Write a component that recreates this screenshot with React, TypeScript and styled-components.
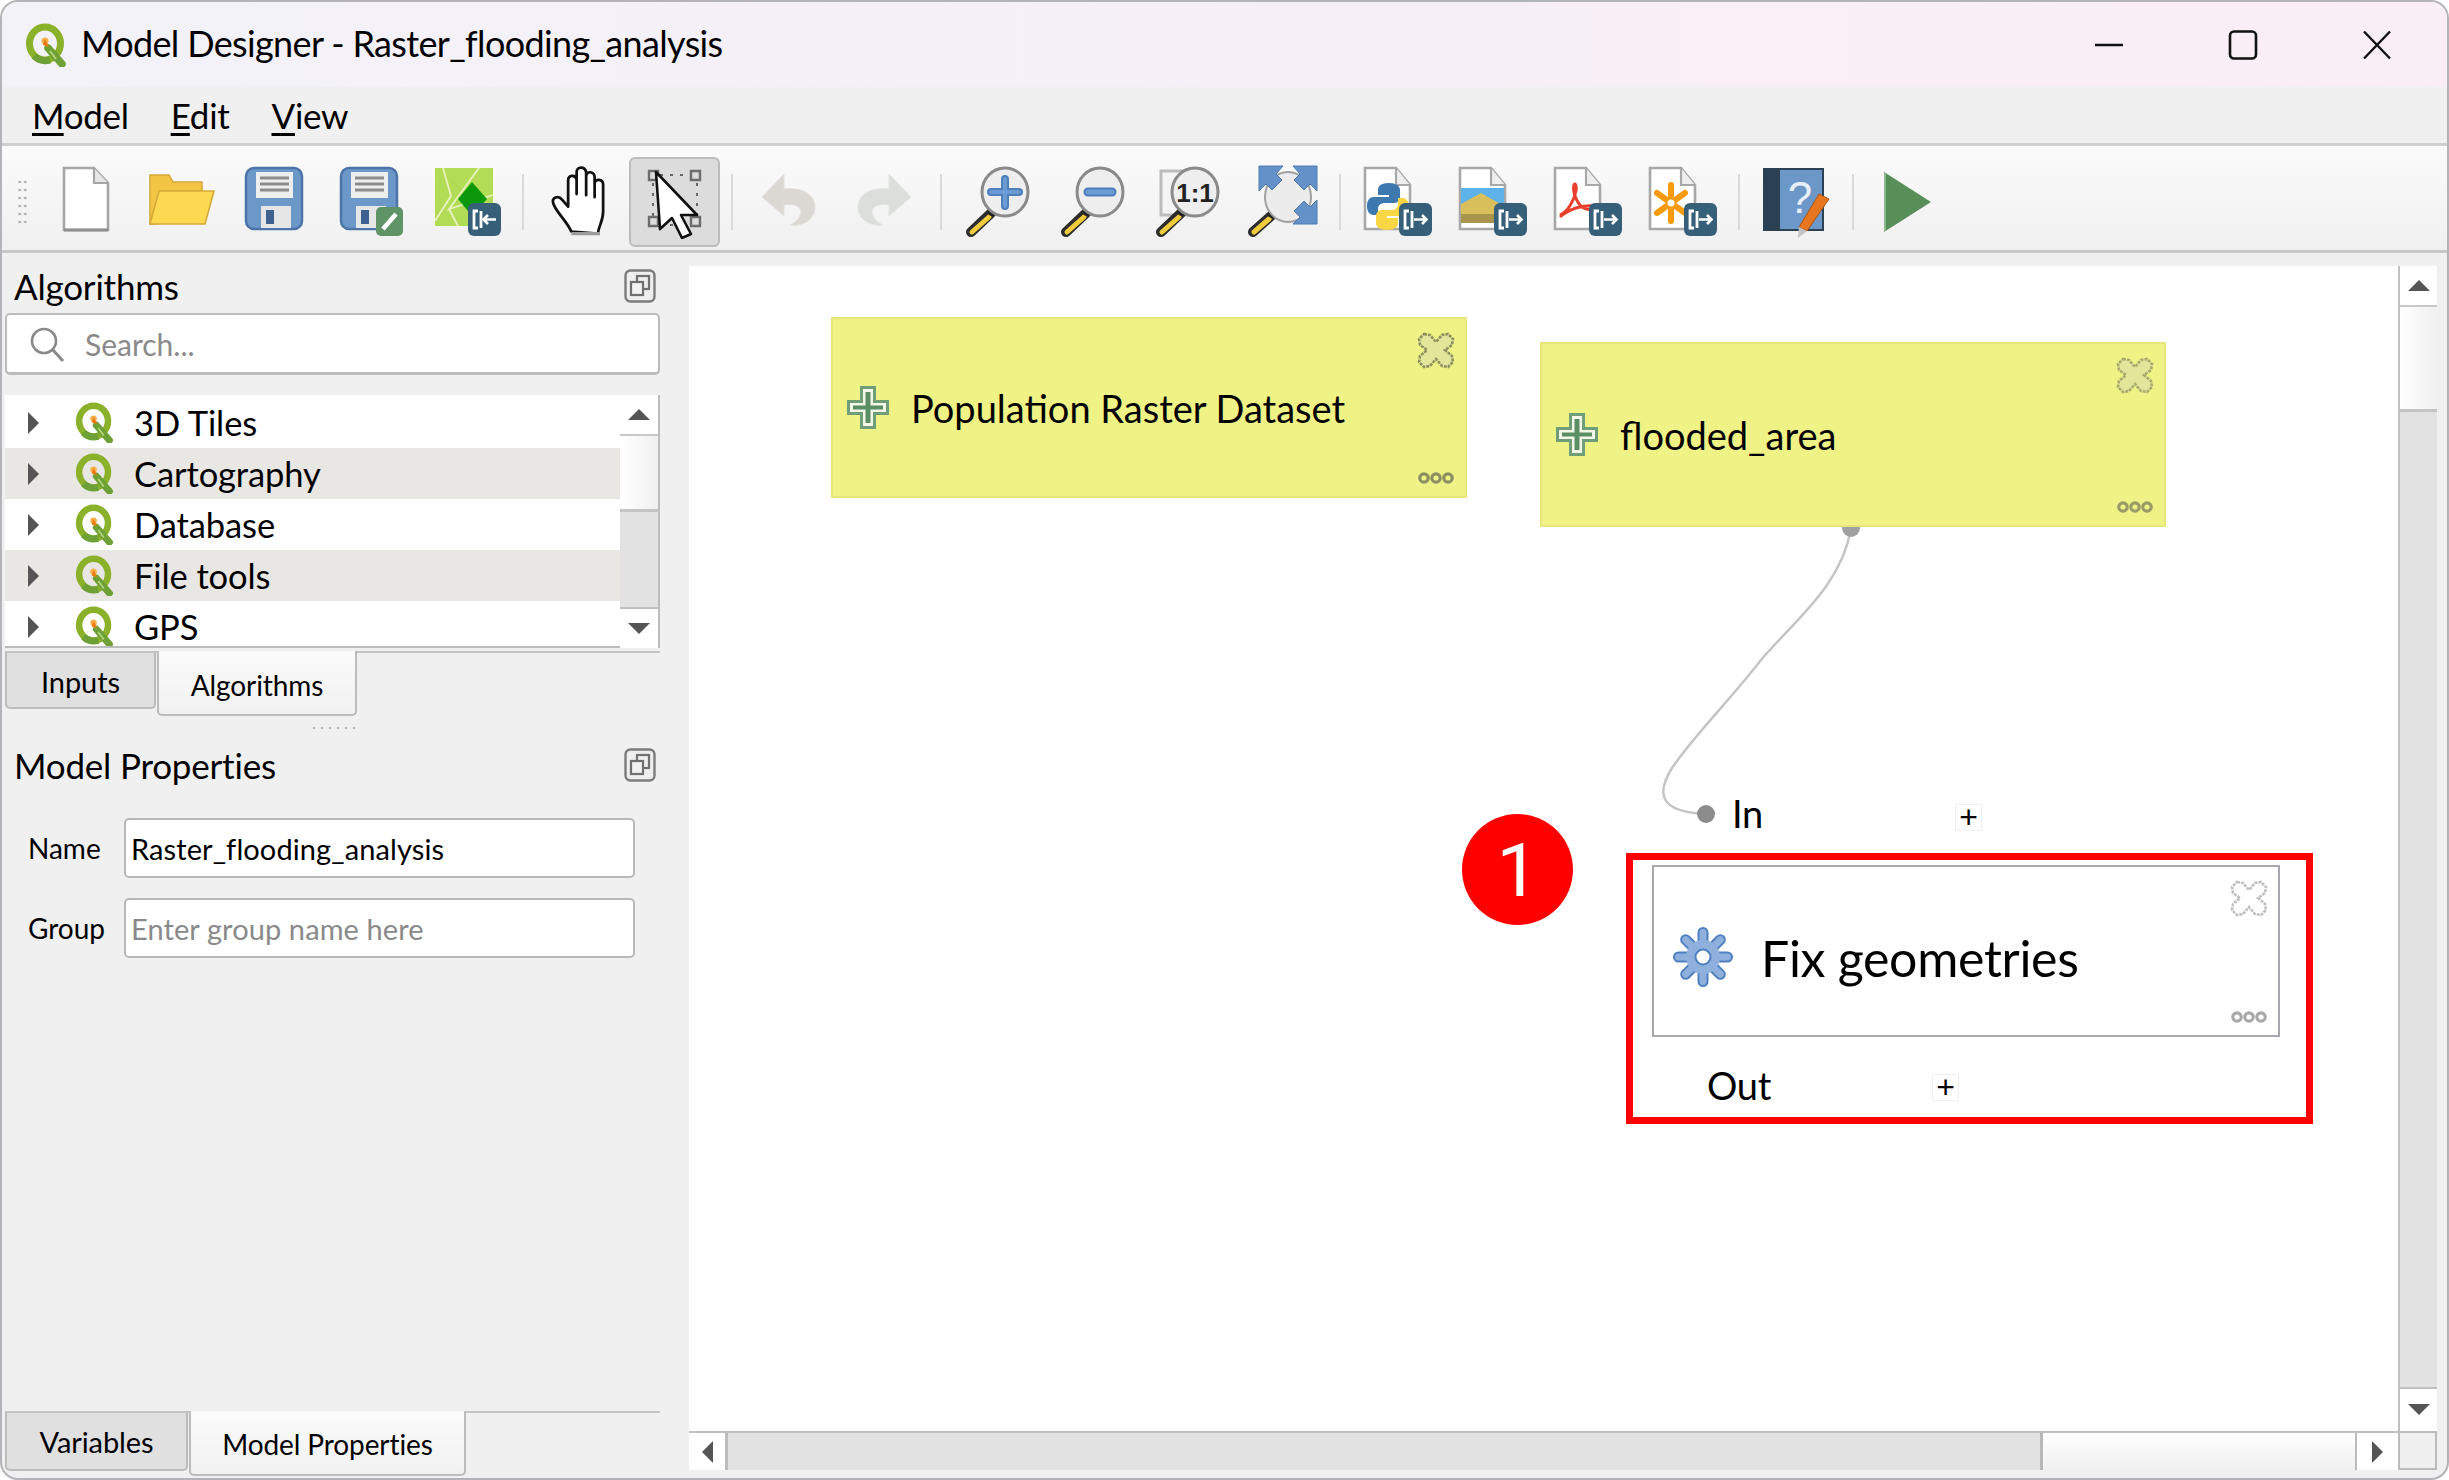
import React from 'react';
import styled, { createGlobalStyle } from 'styled-components';

const GlobalStyle = createGlobalStyle`
  * { box-sizing: border-box; }
  html, body { margin: 0; padding: 0; background: #fff; }
  body { font-family: Lato, "Open Sans", sans-serif; color: #000; }
`;

const Badge = ({ out = true }: { out?: boolean }) => (
  <g>
    <rect x="37" y="38" width="33" height="33" rx="6" fill="#36607a" />
    <path d="M47 46h-4v17h4M50 46v17" stroke="#fff" strokeWidth="2.800" fill="none" />
    {out ? (
      <path d="M52 54.500h12M60 50l4.500 4.500L60 59" stroke="#fff" strokeWidth="2.600" fill="none" />
    ) : (
      <path d="M65 54.500H53M57 50l-4.500 4.500L57 59" stroke="#fff" strokeWidth="2.600" fill="none" />
    )}
  </g>
);

const Page = ({ children }: { children?: React.ReactNode }) => (
  <>
    <path d="M3 3h31l14 17v44H3z" fill="#fff" stroke="#a8a8a8" strokeWidth="2.600" />
    <path d="M34 3v17h14" fill="#eee" stroke="#a8a8a8" strokeWidth="2.200" />
    {children}
    <Badge />
  </>
);

const Lens = ({ children }: { children?: React.ReactNode }) => (
  <>
    <path d="M28 48L8 67" stroke="#2c2c2c" strokeWidth="10" strokeLinecap="round" />
    <path d="M26 52L9 67" stroke="#f0cc3c" strokeWidth="5" strokeLinecap="round" />
    <circle cx="29" cy="47" r="4" fill="#222" />
    <ellipse cx="42" cy="27" rx="23" ry="24" fill="#eeeeee" stroke="#8a8a8a" strokeWidth="3" />
    {children}
  </>
);

const Disk = () => (
  <>
    <rect x="5" y="3" width="56" height="61" rx="8" fill="#6c98c9" stroke="#4c74a8" strokeWidth="2.500" />
    <rect x="15" y="7" width="37" height="26" fill="#eeeeee" />
    <path d="M19 13h29M19 19h29M19 25h29" stroke="#8c8c8c" strokeWidth="3" />
    <rect x="20" y="41" width="30" height="22" fill="#e6e6e6" />
    <rect x="25" y="45" width="8" height="14" fill="#3d6190" />
  </>
);

const icons: Record<string, React.ReactNode> = {
  new: (
    <>
      <path d="M13 3h30l14 15v47H13z" fill="#fff" stroke="#a6a6a6" strokeWidth="2.600" />
      <path d="M43 3v15h14" fill="#e6e6e6" stroke="#a6a6a6" strokeWidth="2.200" />
      <path d="M13 65h44" stroke="#8f8f8f" strokeWidth="3" />
    </>
  ),
  open: (
    <>
      <path d="M4 59V10h19l4 7h29v9H18l-6 33z" fill="#f2c544" stroke="#d6aa38" strokeWidth="1.600" />
      <path d="M4 59l9-33h55l-9 33z" fill="#fdd952" stroke="#d6aa38" strokeWidth="1.600" />
    </>
  ),
  save: <Disk />,
  saveAs: (
    <>
      <Disk />
      <rect x="40" y="42" width="27" height="29" rx="5" fill="#5f9467" />
      <path d="M47 64l13-15" stroke="#fff" strokeWidth="4.500" />
    </>
  ),
  exportModel: (
    <>
      <rect x="4" y="3" width="58" height="58" fill="#b2dc56" />
      <path d="M12 3l8 28-16 25M48 3L18 44l44-14M18 44l9 17" stroke="#e8f3c0" strokeWidth="1.800" fill="none" />
      <path d="M41 17l15 17-15 17-14-17z" fill="#0b990b" />
      <Badge out={false} />
    </>
  ),
  hand: (
    <g transform="translate(3 0) scale(1.060 1.040)">
      <path
        d="M22 64C18 54 8 46 5 37c-2-6 5-8 8-4l6 7V15c0-6 7-6 8-1v14-21c0-6 8-6 9 0v22-18c0-6 8-5 8 1v19-13c0-5 8-5 8 1v26c0 9-4 13-5 21z"
        fill="#fff"
        stroke="#111"
        strokeWidth="2.600"
        strokeLinejoin="round"
      />
      <path d="M22 66h27" stroke="#9a9a9a" strokeWidth="3" />
    </g>
  ),
  select: (
    <>
      <path d="M20 10h30M57 18v36M13 18v36M20 60h30" stroke="#666" strokeWidth="2" strokeDasharray="3 7" />
      <path d="M9 6h9v9H9zM51 6h9v9h-9zM9 52h9v9H9zM51 52h9v9h-9z" fill="none" stroke="#6c6c6c" strokeWidth="2.400" />
      <path d="M16 7l41 43H41l10 19-9 4-10-20-12 11z" fill="#fff" stroke="#111" strokeWidth="2.600" strokeLinejoin="round" />
    </>
  ),
  undo: (
    <path
      transform="matrix(-1 0 0 1 70 0)"
      d="M40 9l22 23-22 19V40c-10-2-20 2-16 10 2 6 6 8 10 10-10 2-24-4-25-16-1-16 15-22 31-20z"
      fill="#dbd7d2"
      stroke="#e4e1dd"
    />
  ),
  redo: (
    <path
      d="M40 9l22 23-22 19V40c-10-2-20 2-16 10 2 6 6 8 10 10-10 2-24-4-25-16-1-16 15-22 31-20z"
      fill="#dbdedb"
      stroke="#e3e6e3"
    />
  ),
  zoomIn: (
    <Lens>
      <path d="M42 14v27M28 27h28" stroke="#4d7fbd" strokeWidth="8" strokeLinecap="round" />
      <path d="M42 14v27M28 27h28" stroke="#6c9ad2" strokeWidth="4" strokeLinecap="round" />
    </Lens>
  ),
  zoomOut: (
    <Lens>
      <path d="M30 27h24" stroke="#4d7fbd" strokeWidth="9" strokeLinecap="round" />
      <path d="M30 27h24" stroke="#6c9ad2" strokeWidth="5" strokeLinecap="round" />
    </Lens>
  ),
  zoomActual: (
    <>
      <rect x="8" y="6" width="42" height="44" fill="#f4f4f4" stroke="#bcbcbc" strokeWidth="3" />
      <Lens>
        <text x="42" y="37" textAnchor="middle" fontFamily="Liberation Sans, sans-serif" fontWeight="700" fontSize="26" fill="#222">
          1:1
        </text>
      </Lens>
    </>
  ),
  zoomFull: (
    <>
      <path d="M23 51L5 67" stroke="#2c2c2c" strokeWidth="10" strokeLinecap="round" />
      <path d="M21 54L6 67" stroke="#f0cc3c" strokeWidth="5" strokeLinecap="round" />
      <circle cx="24" cy="49" r="4" fill="#222" />
      <ellipse cx="40" cy="32" rx="23" ry="25" fill="#ececec" stroke="#a0a0a0" strokeWidth="2" />
      <path
        d="M11 1h24l-7 8 6 6-10 10-6-6-7 7zM69 1H45l7 8-6 6 10 10 6-6 7 7zM69 59H45l7-7-6-6 10-10 6 6 7-7z"
        fill="#6492c8"
        stroke="#4f7bb0"
      />
    </>
  ),
  exportPython: (
    <Page>
      <g transform="translate(0 1)">
        <path d="M27 17c-8 0-11 3-11 7v5h11v2H12c-5 0-7 4-7 9s2 9 7 9h4v-6c0-4 3-6 7-6h9c4 0 6-3 6-6v-7c0-4-4-7-11-7z" fill="#3d78ae" />
        <path d="M25 64c8 0 11-3 11-7v-5H25v-2h15c5 0 7-4 7-9s-2-9-7-9h-4v6c0 4-3 6-7 6h-9c-4 0-6 3-6 6v7c0 4 4 7 11 7z" fill="#f9d644" />
      </g>
    </Page>
  ),
  exportImage: (
    <Page>
      <rect x="4" y="23" width="43" height="26" fill="#5db2ea" />
      <path d="M4 49V39l20-11 23 13v8z" fill="#d8bf5c" />
      <rect x="4" y="49" width="43" height="9" fill="#a8944a" />
    </Page>
  ),
  exportPdf: (
    <Page>
      <path
        d="M8 50c8-3 14-15 16-24 1-5-1-9-2-6-2 6 3 18 8 22 4 3 12 4 14 1 1-3-10-3-20 0-6 2-13 6-16 9"
        fill="none"
        stroke="#e93f2c"
        strokeWidth="3"
      />
    </Page>
  ),
  exportSvg: (
    <Page>
      <path
        d="M24 20v36M10 28l28 20M38 28L10 48"
        stroke="#f79a0c"
        strokeWidth="6"
        strokeLinecap="round"
      />
      <circle cx="24" cy="38" r="3.500" fill="#fff" />
    </Page>
  ),
  help: (
    <>
      <rect x="3" y="4" width="59" height="61" fill="#6c98c9" stroke="#2b4154" strokeWidth="2" />
      <rect x="3" y="4" width="16" height="61" fill="#2b4053" />
      <text x="39" y="48" textAnchor="middle" fontFamily="Liberation Sans, sans-serif" fontSize="44" fill="#e8eef7">
        ?
      </text>
      <path d="M58 29l10 5-22 32-8-4z" fill="#e8761e" stroke="#a85614" />
      <path d="M38 62l8 4-9 7z" fill="#c4c4c4" />
    </>
  ),
  run: (
    <>
      <path d="M9 7l47 30-47 30z" fill="#588f58" />
      <path d="M10 8v58" stroke="#9cc19c" strokeWidth="1.600" />
    </>
  ),
};

const tools: (string | null)[] = [
  'new', 'open', 'save', 'saveAs', 'exportModel', null,
  'hand', 'select', null,
  'undo', 'redo', null,
  'zoomIn', 'zoomOut', 'zoomActual', 'zoomFull', null,
  'exportPython', 'exportImage', 'exportPdf', 'exportSvg', null,
  'help', null,
  'run',
];

const QgisIcon = ({ size }: { size: number }) => (
  <svg width={size} height={size} viewBox="0 0 44 44">
    <ellipse cx="21" cy="20.500" rx="15.500" ry="16.500" fill="none" stroke="#8bb02a" strokeWidth="7" />
    <path d="M10 33a17 17 0 0 0 16 4" fill="none" stroke="#6da035" strokeWidth="7" />
    <path d="M24 25l14 16" stroke="#6da035" strokeWidth="7.500" strokeLinecap="round" />
    <path d="M26 28l6 8" stroke="#b6d47c" strokeWidth="1.800" />
    <circle cx="21" cy="18" r="3.500" fill="#f6b04a" />
    <path d="M21 16l4 8-6-2z" fill="#ee7913" />
  </svg>
);

const FloatIcon = () => (
  <svg width="32" height="34" viewBox="0 0 32 34">
    <rect x="1.500" y="1.500" width="29" height="31" rx="5" fill="#eeeeee" stroke="#7c7c7c" strokeWidth="2.400" />
    <rect x="13" y="7" width="12" height="13" fill="none" stroke="#707070" strokeWidth="2.200" />
    <rect x="7" y="13" width="12" height="13" fill="#f2f2f2" stroke="#707070" strokeWidth="2.200" />
  </svg>
);

const PlusIcon = () => (
  <svg width="44" height="45" viewBox="0 0 44 45">
    <path d="M14 1h16v14h13v15H30v14H14V30H1V15h13z" fill="#6f9f78" />
    <path d="M17 4h10v14h13v9H27v14H17V27H4v-9h13z" fill="#f4f7e8" />
    <path d="M19.500 7h5v13.500H37v4H24.500V38h-5V24.500H7v-4h12.500z" fill="#5a8e64" />
  </svg>
);

const CloseIcon = ({ tone, fill }: { tone: string; fill: string }) => (
  <svg width="38" height="37" viewBox="0 0 38 37">
    <path
      d="M7 2l6 1 6 7 6-7 6-1 5 5-1 6-7 5 7 6 1 6-5 5-6-1-6-7-6 7-6 1-5-5 1-6 7-6-7-5-1-6z"
      fill={fill}
      stroke={tone}
      strokeWidth="2.600"
      strokeDasharray="3 1"
    />
  </svg>
);

const DotsIcon = ({ tone }: { tone: string }) => (
  <svg width="38" height="13" viewBox="0 0 38 13">
    <g fill="none" stroke={tone} strokeWidth="3.200">
      <circle cx="7" cy="7" r="4.200" />
      <circle cx="19" cy="7" r="4.200" />
      <circle cx="31" cy="7" r="4.200" />
    </g>
  </svg>
);

const GearIcon = () => (
  <svg width="62" height="62" viewBox="0 0 62 62">
    {[0, 45, 90, 135, 180, 225, 270, 315].map((a) => (
      <rect
        key={a}
        x="26.500"
        y="2"
        width="9"
        height="20"
        rx="4.500"
        fill="#8fb0dc"
        stroke="#4f80c2"
        strokeWidth="2"
        transform={`rotate(${a} 31 31)`}
      />
    ))}
    <circle cx="31" cy="31" r="17" fill="#8fb0dc" />
    <circle cx="31" cy="31" r="7.500" fill="#fff" stroke="#4f80c2" strokeWidth="2" />
  </svg>
);

const App = () => (
  <>
    <GlobalStyle />
    <Window>
      <TitleBar>
        <QgisIcon size={44} />
        <WindowTitle>Model Designer - Raster_flooding_analysis</WindowTitle>
        <WindowControls>
          <WindowButton>
            <svg width="30" height="30" viewBox="0 0 30 30">
              <path d="M1 15h28" stroke="#111" strokeWidth="2.400" />
            </svg>
          </WindowButton>
          <WindowButton>
            <svg width="30" height="30" viewBox="0 0 30 30">
              <rect x="2" y="1.500" width="26" height="27" rx="4" fill="none" stroke="#111" strokeWidth="2.600" />
            </svg>
          </WindowButton>
          <WindowButton>
            <svg width="30" height="30" viewBox="0 0 30 30">
              <path d="M2 1.500l26 27M28 1.500l-26 27" stroke="#111" strokeWidth="2.400" />
            </svg>
          </WindowButton>
        </WindowControls>
      </TitleBar>

      <MenuBar>
        <MenuItem><u>M</u>odel</MenuItem>
        <MenuItem><u>E</u>dit</MenuItem>
        <MenuItem><u>V</u>iew</MenuItem>
      </MenuBar>

      <Toolbar>
        <ToolbarGrip />
        {tools.map((tool, i) =>
          tool ? (
            <ToolButton key={tool} $active={tool === 'select'}>
              <svg width="70" height="74" viewBox="0 0 70 74">
                {icons[tool]}
              </svg>
            </ToolButton>
          ) : (
            <ToolSeparator key={i} />
          ),
        )}
      </Toolbar>

      <Main>
        <SidePanel>
          <DockHeader>
            <DockTitle>Algorithms</DockTitle>
            <FloatIcon />
          </DockHeader>
          <SearchBox>
            <svg width="36" height="36" viewBox="0 0 36 36">
              <circle cx="15" cy="15" r="12" fill="none" stroke="#8a8a8a" strokeWidth="2.600" />
              <path d="M24 24l10 11" stroke="#8a8a8a" strokeWidth="3" />
            </svg>
            <SearchText>Search...</SearchText>
          </SearchBox>

          <TreeView>
            <TreeList>
              {['3D Tiles', 'Cartography', 'Database', 'File tools', 'GPS'].map((name, i) => (
                <TreeRow key={name} $shaded={i % 2 === 1}>
                  <TreeArrow />
                  <QgisIcon size={41} />
                  <TreeLabel>{name}</TreeLabel>
                </TreeRow>
              ))}
            </TreeList>
            <TreeScrollbar>
              <ScrollButton $size={39} $dir="up" />
              <ScrollTrough $size={75} />
              <ScrollThumb $size={100} />
              <ScrollButton $size={39} $dir="down" />
            </TreeScrollbar>
          </TreeView>

          <TabStrip>
            <Tab $width={151}>Inputs</Tab>
            <Tab $width={200} $active>Algorithms</Tab>
          </TabStrip>
          <HorizontalGrip />

          <DockHeader>
            <DockTitle>Model Properties</DockTitle>
            <FloatIcon />
          </DockHeader>
          <PropertiesArea>
            <PropertiesForm>
              <FormRow>
                <FormLabel>Name</FormLabel>
                <FormInput defaultValue="Raster_flooding_analysis" />
              </FormRow>
              <FormRow>
                <FormLabel>Group</FormLabel>
                <FormInput placeholder="Enter group name here" />
              </FormRow>
            </PropertiesForm>
            <VerticalGrip />
          </PropertiesArea>

          <BottomTabs>
            <Tab $width={183} $low>Variables</Tab>
            <Tab $width={277} $active $low>Model Properties</Tab>
          </BottomTabs>
        </SidePanel>

        <CanvasArea>
          <Canvas>
            <Connector viewBox="689 266 1709 1165">
              <path
                d="M1851 528C1842 585 1795 620 1761 660C1730 700 1692 738 1672 768C1652 800 1668 812 1705 814"
                fill="none"
                stroke="#c4c4c4"
                strokeWidth="2.400"
              />
              <circle cx="1851" cy="528" r="9" fill="#a0a0a0" />
              <circle cx="1706" cy="814" r="9" fill="#8c8c8c" />
            </Connector>

            <ModelNode $x={142} $y={51} $w={636} $h={181} $input>
              <PlusIcon />
              <NodeLabel>Population Raster Dataset</NodeLabel>
              <NodeClose><CloseIcon tone="#8f9160" fill="#e3e69a" /></NodeClose>
              <NodeDots><DotsIcon tone="#8c8e62" /></NodeDots>
            </ModelNode>

            <ModelNode $x={851} $y={76} $w={626} $h={185} $input>
              <PlusIcon />
              <NodeLabel>flooded_area</NodeLabel>
              <NodeClose><CloseIcon tone="#a8aa70" fill="#e3e69a" /></NodeClose>
              <NodeDots><DotsIcon tone="#9a9c68" /></NodeDots>
            </ModelNode>

            <PortLabel $x={1043} $y={547}>In</PortLabel>
            <PortPlus $x={1266} $y={538}>+</PortPlus>

            <ModelNode $x={963} $y={599} $w={628} $h={172}>
              <GearIcon />
              <AlgorithmLabel>Fix geometries</AlgorithmLabel>
              <NodeClose><CloseIcon tone="#c0c0c0" fill="#fff" /></NodeClose>
              <NodeDots><DotsIcon tone="#a8a8a8" /></NodeDots>
            </ModelNode>

            <PortLabel $x={1018} $y={819}>Out</PortLabel>
            <PortPlus $x={1243} $y={808}>+</PortPlus>

            <Highlight />
            <StepBadge>1</StepBadge>
          </Canvas>

          <MainVScroll>
            <ScrollButton $size={39} $dir="up" />
            <ScrollTrough $size={104} />
            <ScrollThumb $size={980} />
            <ScrollButton $size={41} $dir="down" />
          </MainVScroll>

          <MainHScroll>
            <ScrollButton $size={36} $dir="left" />
            <ScrollThumb $size={1318} $horizontal />
            <ScrollTrough $size={314} $horizontal />
            <ScrollButton $size={41} $dir="right" />
          </MainHScroll>
          <ScrollCorner />
        </CanvasArea>
      </Main>
    </Window>
  </>
);

export default App;

const Window = styled.div`
  width: 2449px;
  height: 1480px;
  display: flex;
  flex-direction: column;
  overflow: hidden;
  background: #f0f0f0;
  border: 2px solid #b4b4b8;
  border-radius: 18px;
`;

const TitleBar = styled.div`
  height: 85px;
  flex: none;
  display: flex;
  align-items: center;
  padding: 0 3px 0 22px;
  background: linear-gradient(90deg, #f3f2f9 0%, #f6eff7 50%, #faeef6 100%);
`;

const WindowTitle = styled.div`
  margin: 0 0 3px 13px;
  font-size: 36px;
  letter-spacing: -0.65px;
`;

const WindowControls = styled.div`
  margin-left: auto;
  display: flex;
`;

const WindowButton = styled.div`
  width: 134px;
  height: 70px;
  display: flex;
  align-items: center;
  justify-content: center;
`;

const MenuBar = styled.div`
  height: 56px;
  flex: none;
  display: flex;
  align-items: center;
  gap: 42px;
  padding-left: 30px;
`;

const MenuItem = styled.div`
  font-size: 35px;
  letter-spacing: -0.3px;
  u {
    text-underline-offset: 4px;
  }
`;

const Toolbar = styled.div`
  height: 110px;
  flex: none;
  display: flex;
  align-items: center;
  padding-top: 8px;
  border-top: 3px solid #d0d0d0;
  border-bottom: 3px solid #c8c8c8;
  background: linear-gradient(180deg, #fbfbfb 0%, #f0f0f0 100%);
`;

const ToolbarGrip = styled.div`
  width: 11px;
  height: 48px;
  margin: 0 10px 0 15px;
  background-image: radial-gradient(circle, #a8a8a8 1.200px, transparent 1.600px);
  background-size: 5.500px 8px;
`;

const ToolButton = styled.div<{ $active?: boolean }>`
  width: 91px;
  height: 90px;
  margin: 0 2px;
  display: flex;
  align-items: center;
  justify-content: center;
  border-radius: 6px;
  border: 2px solid ${(p) => (p.$active ? '#bcbcbc' : 'transparent')};
  background: ${(p) => (p.$active ? '#dcdcdc' : 'transparent')};
`;

const ToolSeparator = styled.div`
  width: 19px;
  height: 56px;
  display: flex;
  justify-content: center;
  &::after {
    content: '';
    width: 2px;
    background: #dadada;
  }
`;

const Main = styled.div`
  flex: 1;
  min-height: 0;
  display: flex;
`;

const SidePanel = styled.div`
  width: 687px;
  flex: none;
  display: flex;
  flex-direction: column;
  padding: 13px 29px 3px 3px;
`;

const DockHeader = styled.div`
  height: 47px;
  flex: none;
  display: flex;
  align-items: center;
  justify-content: space-between;
  padding: 0 4px 8px 9px;
`;

const DockTitle = styled.div`
  font-size: 35px;
  letter-spacing: -0.2px;
`;

const SearchBox = styled.div`
  height: 62px;
  flex: none;
  display: flex;
  align-items: center;
  gap: 20px;
  padding-left: 22px;
  background: #fff;
  border: 2px solid #bcbcbc;
  border-bottom-width: 3px;
  border-radius: 5px;
`;

const SearchText = styled.span`
  font-size: 30px;
  color: #8a8a8a;
`;

const TreeView = styled.div`
  height: 253px;
  flex: none;
  margin-top: 20px;
  display: flex;
  background: #fff;
  border-bottom: 2px solid #bcbcbc;
`;

const TreeList = styled.div`
  flex: 1;
  padding-top: 2px;
  overflow: hidden;
`;

const TreeRow = styled.div<{ $shaded?: boolean }>`
  height: 51px;
  display: flex;
  align-items: center;
  padding-left: 23px;
  background: ${(p) => (p.$shaded ? '#e9e7e4' : '#fff')};
`;

const TreeArrow = styled.span`
  width: 0;
  height: 0;
  margin-right: 35px;
  border-style: solid;
  border-width: 11px 0 11px 11px;
  border-color: transparent transparent transparent #555;
`;

const TreeLabel = styled.span`
  margin-left: 19px;
  font-size: 34.500px;
  letter-spacing: -0.1px;
`;

const TreeScrollbar = styled.div`
  width: 40px;
  flex: none;
  display: flex;
  flex-direction: column;
  border-right: 2px solid #bcbcbc;
  background: #fff;
`;

const ScrollButton = styled.div<{ $size: number; $dir: 'up' | 'down' | 'left' | 'right' }>`
  flex: ${(p) => `0 0 ${p.$size}px`};
  display: flex;
  align-items: center;
  justify-content: center;
  background: #fff;
  &::after {
    content: '';
    border-style: solid;
    border-color: transparent;
    ${(p) =>
      p.$dir === 'up'
        ? 'border-width: 0 11px 11px; border-bottom-color: #555;'
        : p.$dir === 'down'
          ? 'border-width: 11px 11px 0; border-top-color: #555;'
          : p.$dir === 'left'
            ? 'border-width: 11px 11px 11px 0; border-right-color: #555;'
            : 'border-width: 11px 0 11px 11px; border-left-color: #555;'}
  }
`;

const ScrollTrough = styled.div<{ $size: number; $horizontal?: boolean }>`
  flex: ${(p) => `0 0 ${p.$size}px`};
  background: ${(p) =>
    p.$horizontal
      ? 'linear-gradient(180deg, #fff 0%, #f0f0f0 100%)'
      : 'linear-gradient(90deg, #fff 0%, #f0f0f0 100%)'};
  ${(p) => (p.$horizontal ? 'border-right: 2px solid #bcbcbc;' : 'border-top: 2px solid #c8c8c8;')}
`;

const ScrollThumb = styled.div<{ $size: number; $horizontal?: boolean }>`
  flex: ${(p) => `0 0 ${p.$size}px`};
  background: #e2e2e2;
  ${(p) =>
    p.$horizontal
      ? 'border-left: 3px solid #bcbcbc; border-right: 3px solid #b8b8b8;'
      : 'border-top: 3px solid #c4c4c4; border-bottom: 2px solid #c0c0c0;'}
`;

const TabStrip = styled.div`
  height: 65px;
  flex: none;
  margin-top: 3px;
  display: flex;
  align-items: flex-start;
  border-top: 2px solid #c4c4c4;
`;

const Tab = styled.div<{ $width: number; $active?: boolean; $low?: boolean }>`
  width: ${(p) => p.$width}px;
  height: ${(p) => (p.$active ? 65 : p.$low ? 58 : 56)}px;
  margin-top: ${(p) => (p.$active ? -2 : 0)}px;
  margin-left: ${(p) => (p.$active ? 1 : 0)}px;
  padding-top: ${(p) => (p.$low ? (p.$active ? 2 : 1) : p.$active ? 4 : 3)}px;
  display: flex;
  align-items: center;
  justify-content: center;
  font-size: ${(p) => (p.$active ? 28 : 29)}px;
  letter-spacing: -0.1px;
  border-radius: 0 0 5px 5px;
  border: 2px solid #bcbcbc;
  border-top: none;
  background: ${(p) => (p.$active ? 'linear-gradient(180deg, #fbfbfb 0%, #f1f1f1 100%)' : '#e0e0e0')};
`;

const HorizontalGrip = styled.div`
  width: 46px;
  height: 4px;
  margin: 10px auto 15px;
  background-image: radial-gradient(circle, #b0b0b0 1px, transparent 1.400px);
  background-size: 8px 4px;
`;

const PropertiesArea = styled.div`
  margin-top: 26px;
  display: flex;
  align-items: flex-start;
`;

const PropertiesForm = styled.div`
  width: 631px;
  flex: none;
  display: flex;
  flex-direction: column;
  gap: 20px;
  padding-left: 22px;
`;

const FormRow = styled.div`
  display: flex;
  align-items: center;
`;

const FormLabel = styled.label`
  width: 97px;
  flex: none;
  padding-left: 1px;
  font-size: 28px;
`;

const FormInput = styled.input`
  width: 511px;
  height: 60px;
  padding: 0 5px;
  font-family: inherit;
  font-size: 29px;
  letter-spacing: 0.1px;
  color: #000;
  background: #fff;
  border: 2px solid #b8b8b8;
  border-radius: 5px;
  outline: none;
  &::placeholder {
    color: #8a8a8a;
    opacity: 1;
  }
`;

const VerticalGrip = styled.div`
  width: 4px;
  height: 46px;
  margin: 32px 0 0 36px;
  background-image: radial-gradient(circle, #b0b0b0 1.200px, transparent 1.600px);
  background-size: 4px 8px;
`;

const BottomTabs = styled.div`
  height: 64px;
  margin-top: auto;
  flex: none;
  display: flex;
  align-items: flex-start;
  border-top: 2px solid #c4c4c4;
`;

const CanvasArea = styled.div`
  flex: 1;
  min-width: 0;
  display: grid;
  grid-template-columns: 1709px 39px;
  grid-template-rows: 1165px 39px;
  padding-top: 13px;
`;

const Canvas = styled.div`
  position: relative;
  background: #fff;
  overflow: hidden;
`;

const Connector = styled.svg`
  position: absolute;
  inset: 0;
  width: 100%;
  height: 100%;
`;

const ModelNode = styled.div<{ $x: number; $y: number; $w: number; $h: number; $input?: boolean }>`
  position: absolute;
  left: ${(p) => p.$x}px;
  top: ${(p) => p.$y}px;
  width: ${(p) => p.$w}px;
  height: ${(p) => p.$h}px;
  display: flex;
  align-items: center;
  padding-left: ${(p) => (p.$input ? 13 : 18)}px;
  padding-top: ${(p) => (p.$input ? 0 : 12)}px;
  background: ${(p) => (p.$input ? '#eff284' : '#fff')};
  border: 2px solid ${(p) => (p.$input ? '#e6e67c' : '#a8a8b0')};
`;

const NodeLabel = styled.div`
  margin-left: 21px;
  font-size: 38px;
`;

const AlgorithmLabel = styled.div`
  margin: 2px 0 0 27px;
  font-size: 50px;
  letter-spacing: -0.3px;
`;

const NodeClose = styled.div`
  position: absolute;
  top: 13px;
  right: 10px;
  line-height: 0;
`;

const NodeDots = styled.div`
  position: absolute;
  bottom: 12px;
  right: 10px;
  line-height: 0;
`;

const PortLabel = styled.div<{ $x: number; $y: number }>`
  position: absolute;
  left: ${(p) => p.$x}px;
  top: ${(p) => p.$y - 25}px;
  height: 50px;
  line-height: 50px;
  font-size: 38px;
  letter-spacing: -0.3px;
`;

const PortPlus = styled.div<{ $x: number; $y: number }>`
  position: absolute;
  left: ${(p) => p.$x}px;
  top: ${(p) => p.$y}px;
  width: 27px;
  height: 27px;
  display: flex;
  align-items: center;
  justify-content: center;
  font-family: "Liberation Sans", sans-serif;
  font-size: 32px;
  background: #fff;
  border: 1px solid #f0f0f0;
`;

const Highlight = styled.div`
  position: absolute;
  left: 937px;
  top: 587px;
  width: 687px;
  height: 271px;
  border: 7px solid #ff0000;
`;

const StepBadge = styled.div`
  position: absolute;
  left: 773px;
  top: 548px;
  width: 111px;
  height: 111px;
  display: flex;
  align-items: center;
  justify-content: center;
  border-radius: 50%;
  background: #ff0000;
  color: #fff;
  font-family: Roboto, sans-serif;
  font-size: 75px;
`;

const MainVScroll = styled.div`
  display: flex;
  flex-direction: column;
  border-left: 2px solid #c0c0c0;
  background: #fff;
`;

const MainHScroll = styled.div`
  display: flex;
  border-top: 2px solid #c0c0c0;
  background: #fff;
`;

const ScrollCorner = styled.div`
  border: 2px solid #bcbcbc;
  background: #f0f0f0;
`;
